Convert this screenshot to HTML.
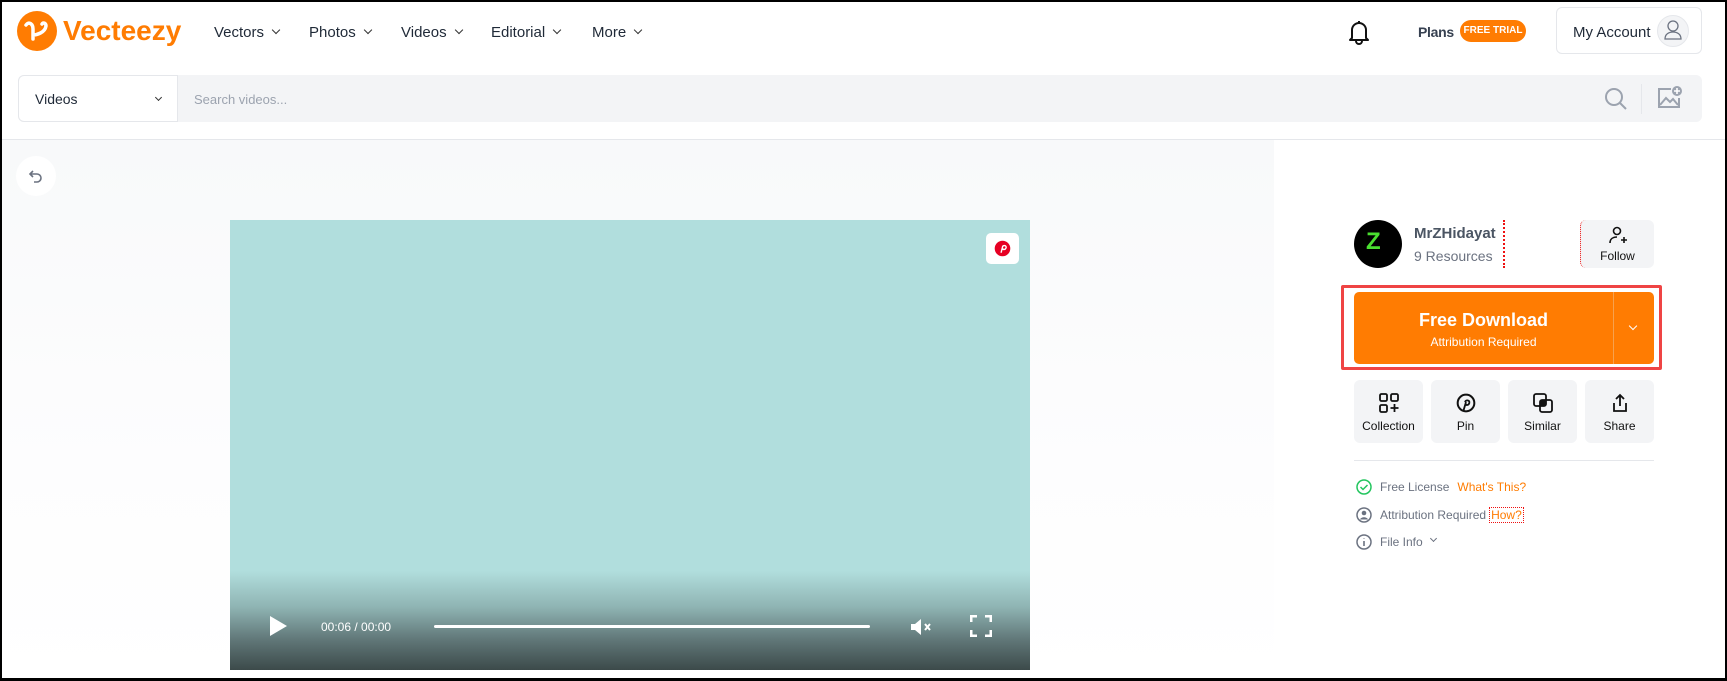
<!DOCTYPE html><html><head><style>
*{margin:0;padding:0;box-sizing:border-box}
body{width:1727px;height:681px;overflow:hidden;font-family:"Liberation Sans",sans-serif;background:#fff;position:relative;color:#1f2937}
.a{position:absolute}
.frame{position:absolute;left:0;top:0;width:1727px;height:681px;border:2px solid #000;border-bottom-width:3px;pointer-events:none;z-index:10}
.nav{font-size:15px;color:#1f2937;top:24px}
.chev{display:inline-block;width:6px;height:6px;border-right:1.5px solid #333;border-bottom:1.5px solid #333;transform:rotate(45deg);margin-left:9px;position:relative;top:-4px}
.btn{background:#f3f4f6;border-radius:6px;text-align:center;font-size:12px;color:#111}
.btn svg{display:block;margin:13px auto 6px}
.row{font-size:12px;color:#6b7280;display:flex;align-items:center;gap:8px}
</style></head><body>
<div class="frame"></div>
<!-- header -->
<svg class="a" style="left:17px;top:11px" width="40" height="40" viewBox="0 0 40 40"><circle cx="20" cy="20" r="20" fill="#ff7c02"/><path d="M9 14c3-4 7-1 7 4v10M16 24c3 0 12-2 13-9 0-3-3-4-4-2" fill="none" stroke="#fff" stroke-width="3.5" stroke-linecap="round"/></svg>
<div class="a" style="left:63px;top:15px;font-size:28px;font-weight:bold;color:#ff7c02">Vecteezy</div>
<div class="a nav" style="left:214px">Vectors<span class="chev"></span></div>
<div class="a nav" style="left:309px">Photos<span class="chev"></span></div>
<div class="a nav" style="left:401px">Videos<span class="chev"></span></div>
<div class="a nav" style="left:491px">Editorial<span class="chev"></span></div>
<div class="a nav" style="left:592px">More<span class="chev"></span></div>
<svg class="a" style="left:1347px;top:19px" width="24" height="26" viewBox="0 0 24 26"><path d="M12 2v2M5 19V11a7 7 0 0 1 14 0v8l2 2H3z M9 22a3 3 0 0 0 6 0" fill="none" stroke="#111" stroke-width="2" stroke-linejoin="round"/></svg>
<div class="a" style="left:1418px;top:24px;font-size:14px;font-weight:bold;color:#374151;letter-spacing:-0.3px">Plans</div>
<div class="a" style="left:1460px;top:20px;width:66px;height:22px;border-radius:11px;background:#ff7c02;color:#fff;font-size:10px;font-weight:bold;text-align:center;line-height:22px">FREE TRIAL</div>
<div class="a" style="left:1556px;top:7px;width:146px;height:47px;border:1px solid #e5e7eb;border-radius:6px"></div>
<div class="a" style="left:1573px;top:24px;font-size:15px;color:#1f2937">My Account</div>
<div class="a" style="left:1657px;top:15px;width:32px;height:32px;border-radius:50%;background:#f3f4f6;border:1px solid #e5e7eb"></div>
<svg class="a" style="left:1663px;top:19px" width="20" height="22" viewBox="0 0 20 22"><circle cx="10" cy="7" r="5" fill="none" stroke="#6b7280" stroke-width="1.3"/><path d="M2 20c0-5 4-7 8-7s8 2 8 7z" fill="none" stroke="#6b7280" stroke-width="1.3"/></svg>
<!-- search -->
<div class="a" style="left:18px;top:75px;width:1684px;height:47px;background:#f3f4f6;border-radius:6px"></div>
<div class="a" style="left:18px;top:75px;width:160px;height:47px;background:#fff;border:1px solid #e5e7eb;border-radius:6px 0 0 6px"></div>
<div class="a" style="left:35px;top:91px;font-size:14px">Videos</div>
<span class="chev" style="position:absolute;left:156px;top:95px;width:5px;height:5px;margin:0"></span>
<div class="a" style="left:194px;top:92px;font-size:13px;color:#9ca3af">Search videos...</div>
<svg class="a" style="left:1604px;top:87px" width="24" height="24" viewBox="0 0 24 24"><circle cx="10" cy="10" r="8" fill="none" stroke="#9ca3af" stroke-width="2"/><path d="M16 16l6 6" stroke="#9ca3af" stroke-width="2"/></svg>
<div class="a" style="left:1641px;top:84px;width:1px;height:30px;background:#e5e7eb"></div>
<svg class="a" style="left:1657px;top:85px" width="26" height="24" viewBox="0 0 26 24"><path d="M14 4H2v18h20v-9" fill="none" stroke="#9ca3af" stroke-width="2"/><path d="M3 20l6-7 4 4 3-3 5 6" fill="none" stroke="#9ca3af" stroke-width="2"/><circle cx="20" cy="6" r="5" fill="#9ca3af"/><path d="M20 3v6M17 6h6" stroke="#fff" stroke-width="1.6"/></svg>
<div class="a" style="left:0;top:139px;width:1727px;height:1px;background:#e5e7eb"></div>
<!-- main -->
<div class="a" style="left:0;top:140px;width:1274px;height:541px;background:linear-gradient(#f8f9fa,#fdfdfe 60%,#fff)"></div>
<div class="a" style="left:16px;top:156px;width:40px;height:40px;border-radius:50%;background:#fff"></div>
<svg class="a" style="left:28px;top:168px" width="16" height="16" viewBox="0 0 16 16"><path d="M5 3L2 6l3 3M2 6h7a4 4 0 0 1 0 8H6" fill="none" stroke="#6b7280" stroke-width="1.6"/></svg>
<div class="a" style="left:230px;top:220px;width:800px;height:450px;background:linear-gradient(#b1dedd 0,#b1dedd 78%,#8fb4b3 86%,#62797a 93%,#3c4a4a 100%)"></div>
<div class="a" style="left:986px;top:233px;width:33px;height:31px;background:#fff;border-radius:5px"></div>
<svg class="a" style="left:994px;top:240px" width="17" height="17" viewBox="0 0 24 24"><circle cx="12" cy="12" r="11" fill="#e60023"/><path d="M10 18l2-8M12 10c0-3 6-3 5 1-1 3-4 3-5 1" fill="none" stroke="#fff" stroke-width="2"/></svg>
<svg class="a" style="left:268px;top:615px" width="20" height="22" viewBox="0 0 20 22"><path d="M2 1l17 10L2 21z" fill="#fff"/></svg>
<div class="a" style="left:321px;top:620px;font-size:12px;color:#fff">00:06 / 00:00</div>
<div class="a" style="left:434px;top:625px;width:436px;height:3px;background:#fff;border-radius:2px"></div>
<svg class="a" style="left:910px;top:618px" width="26" height="18" viewBox="0 0 26 18"><path d="M1 6h4l6-5v16l-6-5H1z" fill="#fff"/><path d="M15 6l5 6M20 6l-5 6" stroke="#fff" stroke-width="2"/></svg>
<svg class="a" style="left:970px;top:615px" width="22" height="22" viewBox="0 0 22 22"><path d="M1 7V1h6M15 1h6v6M21 15v6h-6M7 21H1v-6" fill="none" stroke="#fff" stroke-width="3"/></svg>
<!-- right panel -->
<div class="a" style="left:1354px;top:220px;width:48px;height:48px;border-radius:50%;background:#000"></div>
<div class="a" style="left:1366px;top:228px;font-size:24px;font-weight:bold;color:#4ade30">Z</div>
<div class="a" style="left:1414px;top:225px;font-size:15px;font-weight:bold;color:#4b5563">MrZHidayat</div>
<div class="a" style="left:1414px;top:248px;font-size:14px;color:#6b7280">9 Resources</div>
<div class="a" style="left:1503px;top:220px;height:48px;border-left:2px dotted #e11"></div>
<div class="a btn" style="left:1580px;top:220px;width:74px;height:48px;border-left:1px dotted #e11"><svg width="20" height="20" viewBox="0 0 20 20" style="margin:6px auto 3px"><circle cx="9" cy="5" r="3.5" fill="none" stroke="#111" stroke-width="1.6"/><path d="M2 17c0-4 3-6 7-6M13 14h6M16 11v6" fill="none" stroke="#111" stroke-width="1.6"/></svg>Follow</div>
<div class="a" style="left:1341px;top:285px;width:321px;height:85px;border:3px solid #ef4444;border-radius:2px"></div>
<div class="a" style="left:1354px;top:292px;width:300px;height:72px;background:#ff7c02;border-radius:5px"></div>
<div class="a" style="left:1613px;top:292px;width:1px;height:72px;background:#f7a14e"></div>
<div class="a" style="left:1354px;top:310px;width:259px;text-align:center;color:#fff;font-size:18px;font-weight:bold">Free Download</div>
<div class="a" style="left:1354px;top:335px;width:259px;text-align:center;color:#fff;font-size:12px">Attribution Required</div>
<span class="chev" style="position:absolute;left:1630px;top:323px;width:6px;height:6px;margin:0;border-color:#fff"></span>
<div class="a btn" style="left:1354px;top:380px;width:69px;height:63px"><svg width="20" height="20" viewBox="0 0 20 20"><rect x="1" y="1" width="7" height="7" rx="1.5" fill="none" stroke="#111" stroke-width="1.8"/><rect x="12" y="1" width="7" height="7" rx="1.5" fill="none" stroke="#111" stroke-width="1.8"/><rect x="1" y="12" width="7" height="7" rx="1.5" fill="none" stroke="#111" stroke-width="1.8"/><path d="M15.5 11v8M11.5 15h8" stroke="#111" stroke-width="1.8"/></svg>Collection</div>
<div class="a btn" style="left:1431px;top:380px;width:69px;height:63px"><svg width="20" height="20" viewBox="0 0 24 24"><circle cx="12" cy="12" r="10" fill="none" stroke="#111" stroke-width="2.4"/><path d="M9 21l3-10M11 11c0-3 6-3 5 1-1 3-4 3-5 1" fill="none" stroke="#111" stroke-width="2.2"/></svg>Pin</div>
<div class="a btn" style="left:1508px;top:380px;width:69px;height:63px"><svg width="20" height="20" viewBox="0 0 20 20"><rect x="1" y="1" width="12" height="12" rx="2" fill="none" stroke="#111" stroke-width="1.8"/><rect x="7" y="7" width="12" height="12" rx="2" fill="none" stroke="#111" stroke-width="1.8"/><rect x="7" y="7" width="6" height="6" fill="#111"/></svg>Similar</div>
<div class="a btn" style="left:1585px;top:380px;width:69px;height:63px"><svg width="20" height="20" viewBox="0 0 20 20"><path d="M10 13V2M6 6l4-4 4 4M4 10v8h12v-8" fill="none" stroke="#111" stroke-width="1.8"/></svg>Share</div>
<div class="a" style="left:1354px;top:460px;width:300px;height:1px;background:#e5e7eb"></div>
<div class="a row" style="left:1356px;top:479px"><svg width="16" height="16" viewBox="0 0 16 16"><circle cx="8" cy="8" r="7" fill="none" stroke="#22c55e" stroke-width="1.5"/><path d="M4.5 8l2.5 2.5 4.5-4.5" fill="none" stroke="#22c55e" stroke-width="1.5"/></svg>Free License <span style="color:#ff7c02">What's This?</span></div>
<div class="a row" style="left:1356px;top:507px"><svg width="16" height="16" viewBox="0 0 16 16"><circle cx="8" cy="8" r="7" fill="none" stroke="#6b7280" stroke-width="1.5"/><circle cx="8" cy="6" r="2.3" fill="#6b7280"/><path d="M4 12.5c1-3 7-3 8 0" fill="#6b7280"/></svg>Attribution Required <span style="color:#ff7c02;border:1px dotted #e11;padding:0 1px;margin-left:-5px">How?</span></div>
<div class="a row" style="left:1356px;top:534px"><svg width="16" height="16" viewBox="0 0 16 16"><circle cx="8" cy="8" r="7" fill="none" stroke="#6b7280" stroke-width="1.5"/><path d="M8 7v5M8 4.5v.5" stroke="#6b7280" stroke-width="1.6"/></svg> File Info <span class="chev" style="margin-left:0;width:5px;height:5px;border-color:#6b7280"></span></div>
</body></html>
